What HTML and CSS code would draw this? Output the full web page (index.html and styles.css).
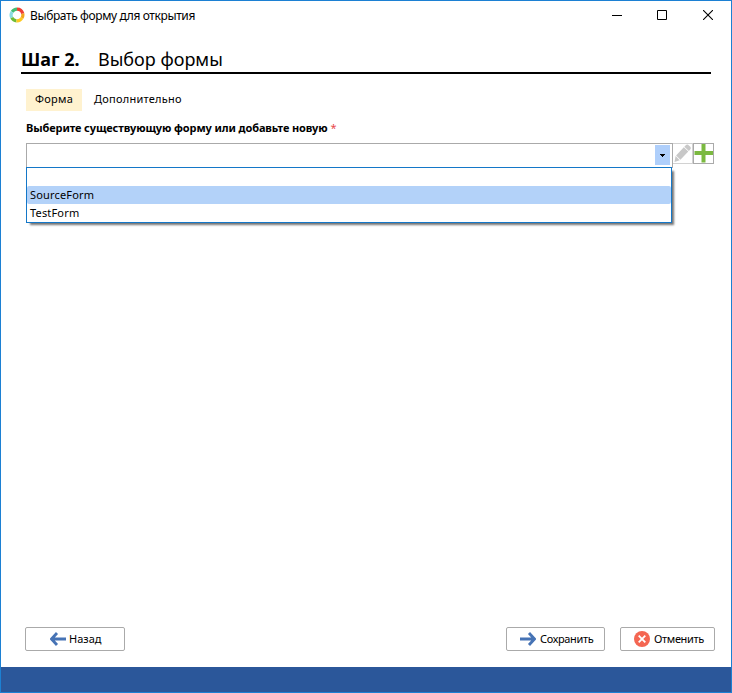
FILE: index.html
```html
<!DOCTYPE html>
<html lang="ru">
<head>
<meta charset="utf-8">
<title>Выбрать форму для открытия</title>
<link rel="stylesheet" href="styles.css">
</head>
<body>
<div class="window">
  <header class="titlebar">
    <svg class="logo" width="16" height="16" viewBox="0 0 16 16" fill="none" stroke-width="3.2">
      <path d="M8 2.1A5.9 5.9 0 0 0 3.1 4.8" stroke="#45bd72"/>
      <path d="M3.1 4.8A5.9 5.9 0 0 0 2.8 10.8" stroke="#8bdce0"/>
      <path d="M2.8 10.8A5.9 5.9 0 0 0 7.5 13.9" stroke="#6ebc37"/>
      <path d="M7.5 13.9A5.9 5.9 0 0 0 13 11" stroke="#ffc91f"/>
      <path d="M13 11A5.9 5.9 0 0 0 13.7 6.5" stroke="#f4a51c"/>
      <path d="M13.7 6.5A5.9 5.9 0 0 0 8 2.1" stroke="#ee3e32"/>
    </svg>
    <span class="title">Выбрать форму для открытия</span>
    <div class="controls">
      <svg width="10" height="10" viewBox="0 0 10 10"><path d="M0 5.5h10" stroke="#000"/></svg>
      <svg width="10" height="10" viewBox="0 0 10 10"><path d="M.5.5h9v9h-9z" fill="none" stroke="#000"/></svg>
      <svg width="10" height="10" viewBox="0 0 10 10"><path d="M0 0l10 10M10 0L0 10" stroke="#000" stroke-width="1.1"/></svg>
    </div>
  </header>
  <main class="content">
    <h1 class="heading"><span class="step">Шаг 2.</span><span>Выбор формы</span></h1>
    <nav class="tabs"><span class="tab active">Форма</span><span class="tab">Дополнительно</span></nav>
    <div class="label"><b>Выберите существующую форму или добавьте новую</b><span class="required">*</span></div>
    <div class="field">
      <div class="combo">
        <div class="arrow"><svg width="5" height="3" viewBox="0 0 5 3" shape-rendering="crispEdges"><path d="M0 0h5v1H4v1H3v1H2V2H1V1H0z"/></svg></div>
        <ul class="options">
          <li></li>
          <li class="selected">SourceForm</li>
          <li>TestForm</li>
        </ul>
      </div>
      <div class="tool edit"><svg width="19" height="19" viewBox="0 0 19 19" fill="#c8c8c8"><path d="M12.5 1.5q1.8-1.7 3.4-.1l1.2 1.2q1.5 1.6-.1 3.2l-1.1 1.2-4.6-4.3zM10.8 3.3l4.5 4.3-7.9 8.1-4.3-4.2zM2.6 12.1l4.1 4.1-5.2 1.9z"/></svg></div>
      <div class="tool add"><svg width="19" height="19" viewBox="0 0 19 19"><path d="M7.5 0h4v7H19v4h-7.5v7.5h-4V11H.5V7h7z" fill="#7bb940"/></svg></div>
    </div>
  </main>
  <div class="actions">
    <div class="button back"><svg width="16" height="14" viewBox="0 0 16 14"><path d="M7 1L1.5 7 7 13M2 7h14" fill="none" stroke="#4673b5" stroke-width="2.8"/></svg><span>Назад</span></div>
    <div class="button save"><svg width="16" height="14" viewBox="0 0 16 14"><path d="M9 1l5.5 6L9 13M14 7H0" fill="none" stroke="#4673b5" stroke-width="2.8"/></svg><span>Сохранить</span></div>
    <div class="button cancel"><svg width="16" height="16" viewBox="0 0 16 16"><circle cx="8" cy="8" r="8" fill="#f46652"/><path d="M4.7 4.7l6.6 6.6m0-6.6l-6.6 6.6" stroke="#fff" stroke-width="1.8"/></svg><span>Отменить</span></div>
  </div>
  <footer class="footer"></footer>
</div>
</body>
</html>
```
FILE: styles.css
```css
* { box-sizing: border-box; }
body { margin: 0; font: 11px/18px "Noto Sans", "Open Sans", sans-serif; color: #000; }
svg { display: block; flex: none; }
span, b { white-space: nowrap; }
.window { width: 732px; height: 693px; border: 1px solid #1c80d3; background: #fff; display: flex; flex-direction: column; }
.titlebar { height: 29px; padding: 0 18px 0 8px; display: flex; align-items: center; }
.logo { margin-top: -1px; }
.title { margin: 1px 0 0 5px; font-size: 12px; letter-spacing: -.38px; }
.controls { margin: -1px 0 0 auto; display: flex; gap: 35px; }
.controls svg:last-child { margin-left: 1px; }
.content { flex: 1; padding: 17px 17px 0 20px; }
.heading { margin: 0; width: 690px; height: 27px; border-bottom: 2px solid #000; display: flex; font-size: 18px; line-height: 25px; font-weight: 400; }
.step { width: 77px; font-weight: 700; }
.tabs { display: flex; margin: 15px 0 0 5px; height: 22px; line-height: 20px; letter-spacing: .25px; }
.tab { padding-left: 9px; }
.tab.active { width: 56px; background: #fff2cf; margin-right: 3px; }
.label { margin: 8px 0 0 5px; height: 18px; font-size: 11px; letter-spacing: -.11px; }
.required { margin-left: 3px; color: #e8484b; }
.field { display: flex; margin: 6px 0 0 5px; }
.combo { position: relative; width: 647px; height: 25px; border: 1px solid #aaa; border-bottom: 0; }
.arrow { width: 15px; height: 20px; margin: 1px 2px 0 auto; background: #afcffb; display: flex; align-items: center; justify-content: center; }
.options { position: absolute; left: -1px; top: 23px; width: 646px; height: 56px; margin: 0; padding: 0; list-style: none; border: 1px solid #1477c8; background: #fff; box-shadow: 3px 3px 2px -1px rgba(0,0,0,.55); letter-spacing: .17px; }
.options li { height: 18px; padding-left: 3px; line-height: 18px; }
.options .selected { background: #b3d2f9; border-radius: 2px; }
.tool { width: 21px; height: 21px; border: 1px solid #aaa; }
.edit { border-color: #d2d2d2; border-left: 0; width: 20px; }
.actions { display: flex; height: 24px; margin: 0 16px 16px 24px; }
.button { height: 24px; border: 1px solid #aaa; border-radius: 2px; display: flex; align-items: center; gap: 4px; }
.back { width: 100px; padding-left: 24px; gap: 3px; }
.save { width: 99px; padding-left: 13px; margin-left: auto; letter-spacing: -.35px; }
.cancel { width: 95px; padding-left: 13px; margin-left: 15px; letter-spacing: -.35px; }
.footer { height: 25px; background: #2b579a; }
```
